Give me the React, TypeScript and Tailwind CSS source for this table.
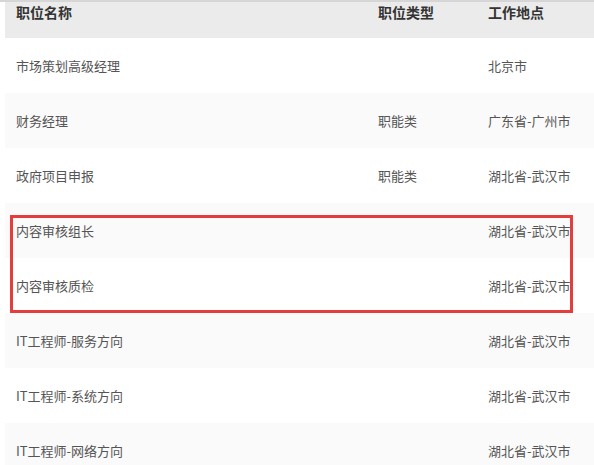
import React from 'react';

interface Job {
  name: string;
  type: string;
  place: string;
}

const jobs: Job[] = [
  { name: '市场策划高级经理', type: '', place: '北京市' },
  { name: '财务经理', type: '职能类', place: '广东省-广州市' },
  { name: '政府项目申报', type: '职能类', place: '湖北省-武汉市' },
  { name: '内容审核组长', type: '', place: '湖北省-武汉市' },
  { name: '内容审核质检', type: '', place: '湖北省-武汉市' },
  { name: 'IT工程师-服务方向', type: '', place: '湖北省-武汉市' },
  { name: 'IT工程师-系统方向', type: '', place: '湖北省-武汉市' },
  { name: 'IT工程师-网络方向', type: '', place: '湖北省-武汉市' },
];

const App: React.FC = () => {
  return (
    <div
      className="relative w-[594px] h-[465px] overflow-hidden bg-white"
      style={{ fontFamily: '"Noto Sans CJK SC", "Liberation Sans", sans-serif' }}
    >
      <div className="h-[2px] bg-[#d6d6d6]" />
      <div className="ml-[5px]">
        <div className="grid grid-cols-[362px_110px_1fr] h-[36px] pl-[11px] bg-[#ebebeb] text-[14px] leading-[16px] font-bold text-[#333] pt-[2px]">
          <div>职位名称</div>
          <div>职位类型</div>
          <div>工作地点</div>
        </div>
        {jobs.map((job, i) => (
          <div
            key={job.name}
            className={
              'grid grid-cols-[362px_110px_1fr] items-center h-[55px] pl-[11px] text-[13px] text-[#555] ' +
              (i % 2 === 1 ? 'bg-[#fafafa]' : 'bg-white')
            }
          >
            <div>{job.name}</div>
            <div>{job.type}</div>
            <div>{job.place}</div>
          </div>
        ))}
      </div>
      {/* highlight annotation */}
      <div className="absolute left-[10px] top-[215px] w-[563px] h-[98px] border-[3px] border-[#e53c3c]" />
    </div>
  );
};

export default App;
